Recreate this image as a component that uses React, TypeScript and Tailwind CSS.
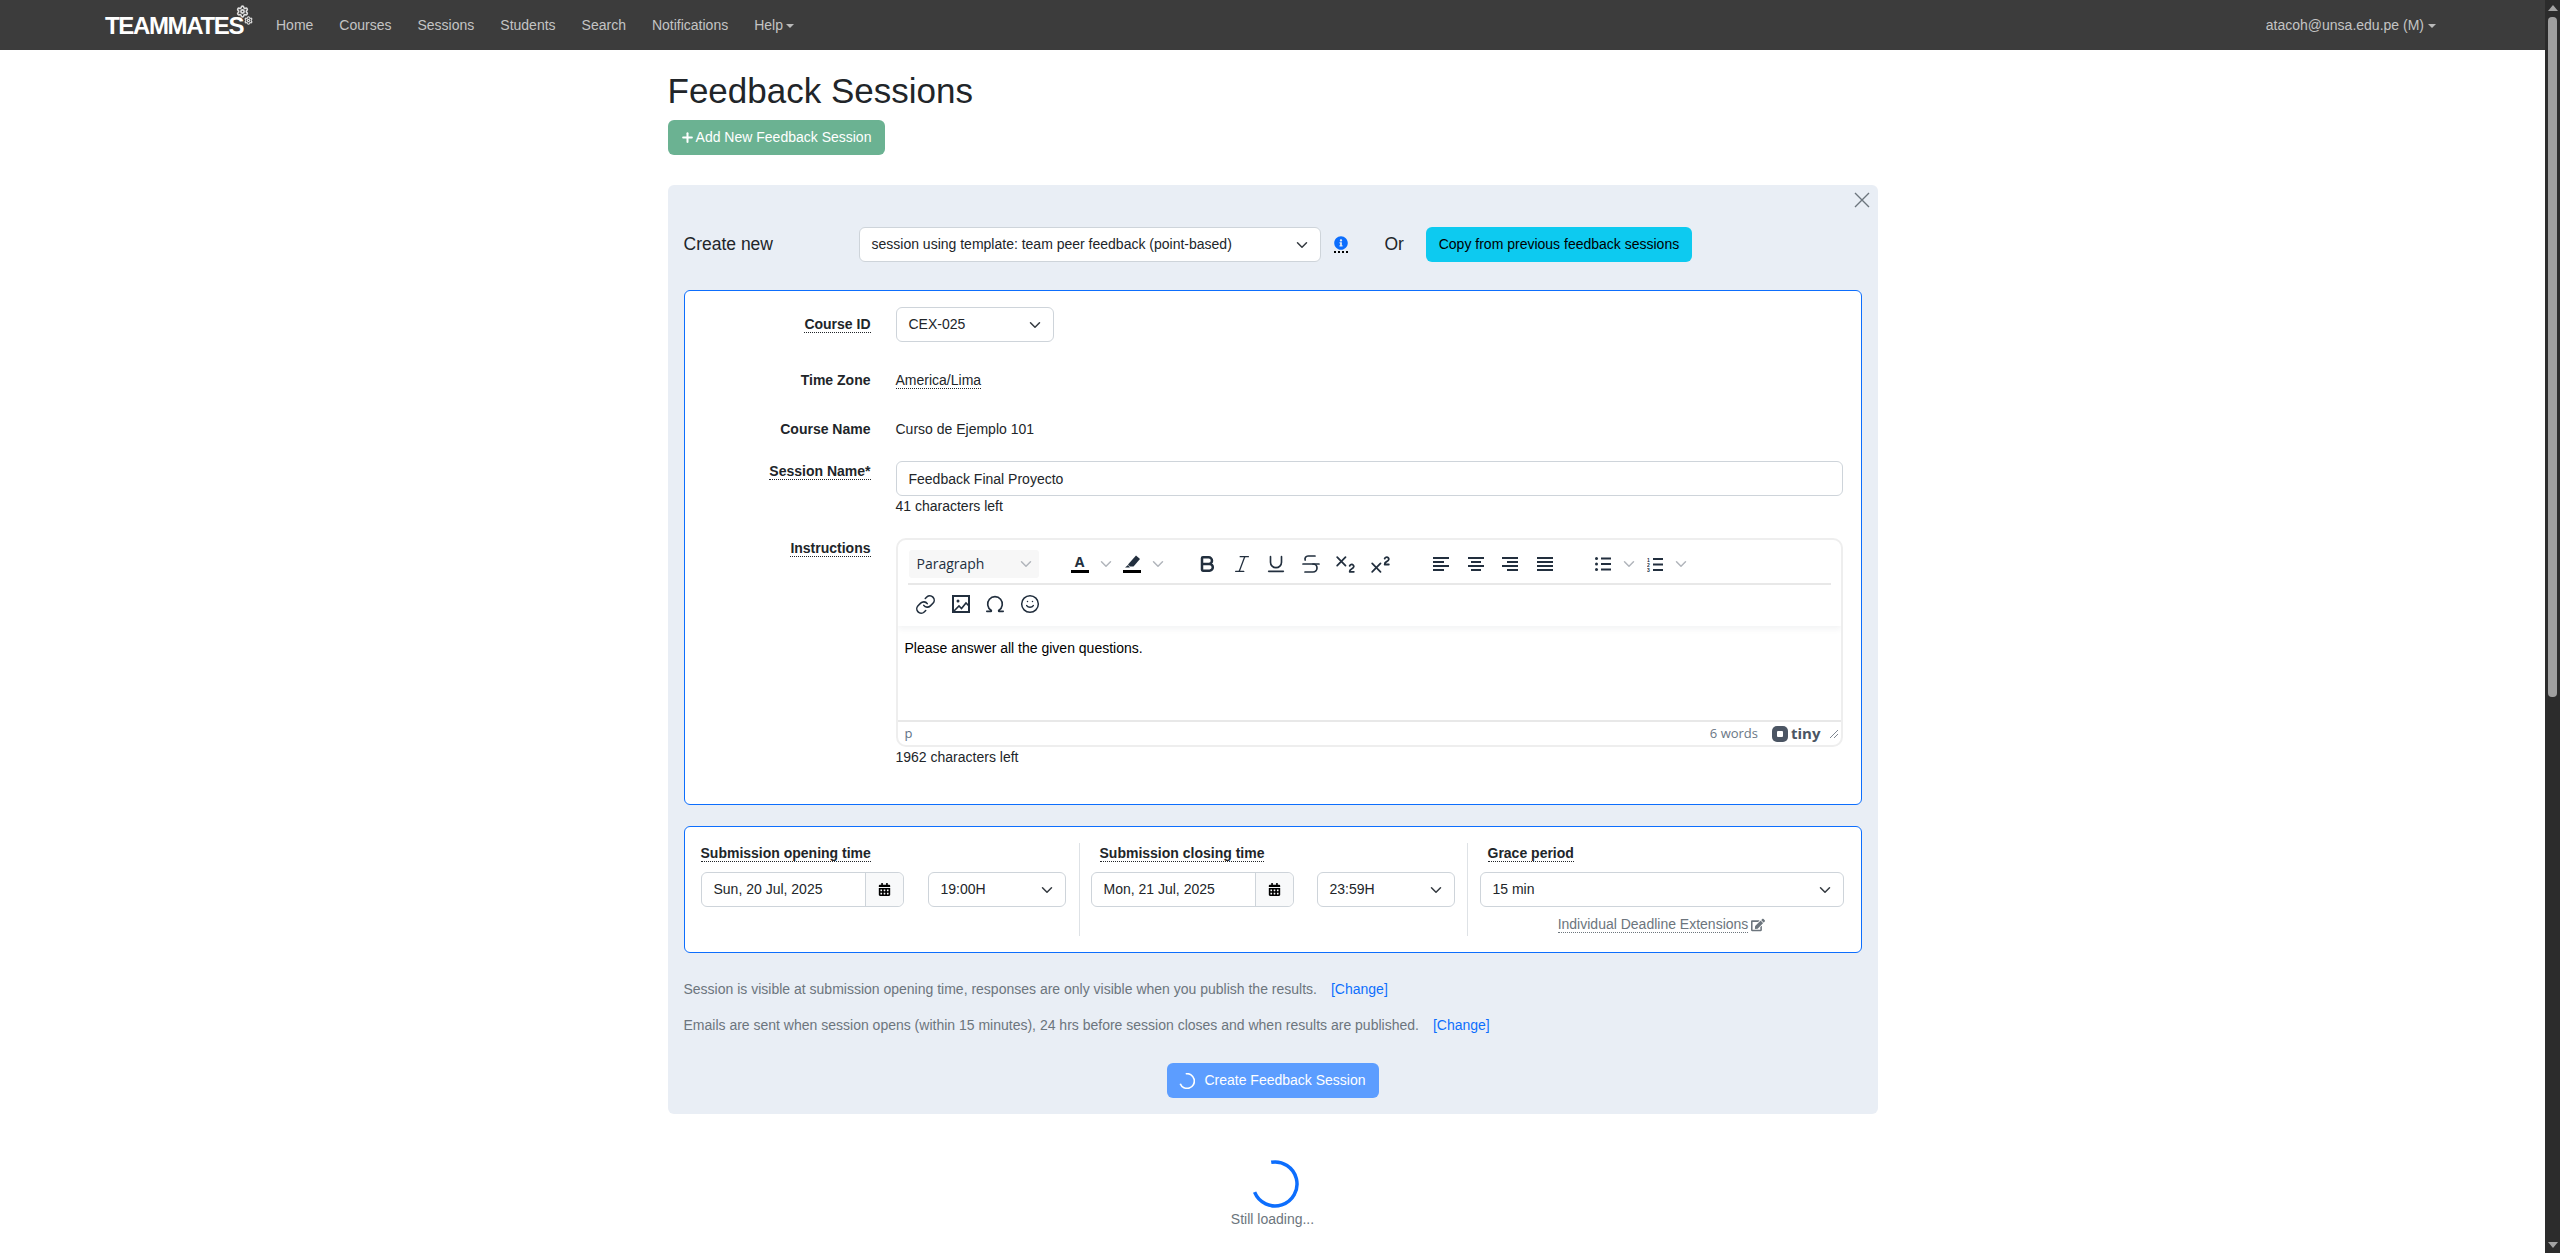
import {
  Bold,
  Italic,
  Underline,
  Strikethrough,
  Subscript,
  Superscript,
  Link,
  Omega,
  Plus,
  Smile,
  Settings,
} from 'lucide-react'
import { FaCalendarAlt, FaEdit, FaInfoCircle } from 'react-icons/fa'

const NAV_LINKS = ['Home', 'Courses', 'Sessions', 'Students', 'Search', 'Notifications']

function Caret() {
  return <span className="inline-block ml-[3px] border-x-[4px] border-t-[4px] border-x-transparent border-t-[#b9b9b9] align-[2px]" />
}

function Chevron({ className = 'text-[#343a40]' }: { className?: string }) {
  return (
    <svg viewBox="0 0 16 16" className={`w-[12px] h-[12px] ${className}`} fill="none" stroke="currentColor" strokeWidth="2" strokeLinecap="round" strokeLinejoin="round">
      <path d="M2 5l6 6 6-6" />
    </svg>
  )
}

function Select({ value, className = '' }: { value: string; className?: string }) {
  return (
    <div className={`h-[35px] flex items-center justify-between pl-[12px] pr-[12px] bg-white border border-[#ced4da] rounded-[6px] text-[14px] text-[#212529] ${className}`}>
      <span>{value}</span>
      <Chevron />
    </div>
  )
}

function Dotted({ children, className = '' }: { children: React.ReactNode; className?: string }) {
  return <span className={`border-b border-dotted border-current leading-[16px] inline-block ${className}`}>{children}</span>
}

function DateInput({ value }: { value: string }) {
  return (
    <div className="w-[203px] h-[35px] flex bg-white border border-[#ced4da] rounded-[6px] text-[14px] text-[#212529]">
      <div className="w-[164px] pl-[12px] flex items-center border-r border-[#ced4da]">{value}</div>
      <div className="flex-1 flex items-center justify-center bg-[#f8f9fa] rounded-r-[6px]">
        <FaCalendarAlt size={13} className="text-black" />
      </div>
    </div>
  )
}

function Btn({ children }: { children: React.ReactNode }) {
  return <div className="w-[34.7px] h-[28px] flex items-center justify-center text-[#222f3e]">{children}</div>
}

function SplitBtn({ children }: { children: React.ReactNode }) {
  return (
    <div className="flex items-center h-[28px]">
      <div className="w-[34px] flex items-center justify-center text-[#222f3e]">{children}</div>
      <div className="w-[18px] flex items-center justify-center"><Chevron className="text-[#b2b6bc]" /></div>
    </div>
  )
}

function AlignIcon({ lines }: { lines: [number, number][] }) {
  return (
    <svg width="16" height="14" viewBox="0 0 16 14" fill="currentColor">
      {lines.map(([x, w], i) => (
        <rect key={i} x={x} y={i * 4} width={w} height="2" />
      ))}
    </svg>
  )
}

function ToolbarRow() {
  return (
    <div className="flex items-center h-[28px] pl-[13px]">
      <div className="w-[130px] h-[28px] flex items-center justify-between pl-[8px] pr-[7px] bg-[#f7f7f7] rounded-[3px] text-[14px] text-[#222f3e] font-['Open_Sans',sans-serif] leading-none">
        <span>Paragraph</span>
        <Chevron className="text-[#b2b6bc]" />
      </div>
      <div className="ml-[24px] flex">
        <SplitBtn>
          <div className="flex flex-col items-center">
            <span className="text-[14px] leading-[14px] font-bold font-['Open_Sans',sans-serif]">A</span>
            <span className="w-[18px] h-[3px] bg-black mt-[1px]" />
          </div>
        </SplitBtn>
        <SplitBtn>
          <div className="flex flex-col items-center">
            <svg width="18" height="13" viewBox="0 0 18 13" fill="currentColor"><path d="M13 0.5l4 3.5-6.5 7.5H7L5 9.5z" /><path d="M5 10l2 2.5H2z" /></svg>
            <span className="w-[18px] h-[3px] bg-black mt-[2px]" />
          </div>
        </SplitBtn>
      </div>
      <div className="ml-[23px] flex">
        <Btn><Bold size={20} strokeWidth={3} /></Btn>
        <Btn><Italic size={22} strokeWidth={1.4} /></Btn>
        <Btn><Underline size={22} strokeWidth={1.8} /></Btn>
        <Btn><Strikethrough size={24} strokeWidth={1.7} /></Btn>
        <Btn><Subscript size={25} strokeWidth={1.7} /></Btn>
        <Btn><Superscript size={25} strokeWidth={1.7} /></Btn>
      </div>
      <div className="ml-[26px] flex">
        <Btn><AlignIcon lines={[[0, 16], [0, 11], [0, 16], [0, 11]]} /></Btn>
        <Btn><AlignIcon lines={[[0, 16], [3, 10], [0, 16], [3, 10]]} /></Btn>
        <Btn><AlignIcon lines={[[0, 16], [5, 11], [0, 16], [5, 11]]} /></Btn>
        <Btn><AlignIcon lines={[[0, 16], [0, 16], [0, 16], [0, 16]]} /></Btn>
      </div>
      <div className="ml-[24px] flex">
        <SplitBtn>
          <svg width="16" height="14" viewBox="0 0 16 14" fill="currentColor">
            <circle cx="1.5" cy="1.5" r="1.5" /><circle cx="1.5" cy="7" r="1.5" /><circle cx="1.5" cy="12.5" r="1.5" />
            <rect x="6" y="0.5" width="10" height="2" /><rect x="6" y="6" width="10" height="2" /><rect x="6" y="11.5" width="10" height="2" />
          </svg>
        </SplitBtn>
        <SplitBtn>
          <svg width="16" height="15" viewBox="0 0 16 15" fill="currentColor">
            <text x="0" y="4.5" fontSize="5" fontWeight="700">1</text><text x="0" y="9.5" fontSize="5" fontWeight="700">2</text><text x="0" y="14.5" fontSize="5" fontWeight="700">3</text>
            <rect x="6" y="1" width="10" height="2" /><rect x="6" y="6.5" width="10" height="2" /><rect x="6" y="12" width="10" height="2" />
          </svg>
        </SplitBtn>
      </div>
    </div>
  )
}

function Editor() {
  return (
    <div className="h-[209px] border-2 border-[#eeeeee] rounded-[10px] flex flex-col overflow-hidden">
      <div className="h-[86px] pt-[10px] shadow-[0_3px_6px_rgba(34,47,62,0.06)] relative">
        <div className="-ml-[2px]"><ToolbarRow /></div>
        <div className="mx-[10px] mt-[5px] border-t-2 border-[#e8e8e8]" />
        <div className="flex items-center h-[38px] pl-[11px] text-[#222f3e]">
          <Btn><Link size={21} strokeWidth={1.8} /></Btn>
          <Btn>
            <svg width="18" height="18" viewBox="0 0 18 18" fill="none" stroke="currentColor" strokeWidth="2">
              <rect x="1" y="1" width="16" height="16" />
              <circle cx="6" cy="6" r="1.5" fill="currentColor" stroke="none" />
              <path d="M2 16l5-5 2.5 2.5L14 8l3 3" strokeWidth="1.6" />
            </svg>
          </Btn>
          <Btn><Omega size={22} strokeWidth={1.8} /></Btn>
          <Btn><Smile size={20} strokeWidth={1.8} /></Btn>
        </div>
      </div>
      <div className="flex-1 px-[7px] pt-[12px] text-[14px] leading-[20px] text-black">Please answer all the given questions.</div>
      <div className="h-[25px] border-t-2 border-[#e8e8e8] flex items-center justify-between pl-[7px] pr-[2px] text-[13px] text-[#5f7186] font-['Open_Sans',sans-serif]">
        <span>p</span>
        <div className="flex items-center">
          <span className="text-[#6b7785]">6 words</span>
          <span className="ml-[14px] w-[16px] h-[16px] rounded-[5px] bg-[#4b5563] flex items-center justify-center">
            <span className="w-[6px] h-[6px] bg-white rounded-[1px]" />
          </span>
          <span className="ml-[3px] text-[15px] leading-none font-bold text-[#4b5563]">tiny</span>
          <svg width="10" height="10" viewBox="0 0 10 10" className="ml-[8px] text-[#7f8791]" stroke="currentColor" fill="none"><path d="M1 9l8-8M5 9l4-4" /></svg>
        </div>
      </div>
    </div>
  )
}

function Spinner({ size, stroke, className }: { size: number; stroke: number; className: string }) {
  return (
    <svg width={size} height={size} viewBox="0 0 48 48" fill="none" className={className} stroke="currentColor" strokeWidth={stroke}>
      <path d="M20.2 2.3A22 22 0 1 1 3.6 32.2" />
    </svg>
  )
}

export default function App() {
  return (
    <div className="flex h-[1253px] overflow-hidden bg-white font-['Liberation_Sans',Arial,sans-serif] text-[#212529] text-[14px]">
      <div className="flex-1 min-w-0">
        <nav className="h-[50px] bg-[#3c3c3c] flex items-center pl-[105px] text-[#c4c4c4] text-[14px]">
          <div className="relative w-[148px] text-white font-bold text-[24px] tracking-[-1.35px] leading-none pt-[2px]">
            TEAMMATES
            <Settings size={13} strokeWidth={3} className="absolute left-[131px] top-[-7px] text-[#dddddd]" />
            <Settings size={9} strokeWidth={3} className="absolute left-[139px] top-[4px] text-[#dddddd]" />
          </div>
          <div className="flex ml-[23px] gap-[26px]">
            {NAV_LINKS.map((l) => <span key={l}>{l}</span>)}
            <span>Help<Caret /></span>
          </div>
          <span className="ml-auto mr-[109px]">atacoh@unsa.edu.pe (M)<span className="ml-[1px]"><Caret /></span></span>
        </nav>

        <main className="w-[1210px] mx-auto">
          <h1 className="mt-[21px] h-[40px] text-[35px] leading-[40px] text-[#212529]">Feedback Sessions</h1>
          <button className="mt-[9px] flex items-center justify-center gap-[1px] w-[217px] h-[35px] pr-[1px] bg-[#6bb292] rounded-[6px] text-white text-[14px]">
            <Plus size={15} strokeWidth={3.2} />Add New Feedback Session
          </button>

          <section className="relative mt-[30px] h-[929px] bg-[#e9eef5] rounded-[6px] px-[16px] pt-[42px]">
            <svg width="16" height="16" viewBox="0 0 16 16" className="absolute right-[8px] top-[7px] text-[#6c757d]" stroke="currentColor" strokeWidth="1.4"><path d="M1 1l14 14M15 1L1 15" /></svg>

            <div className="flex items-center h-[35px]">
              <span className="w-[175px] text-[17.5px]">Create new</span>
              <Select value="session using template: team peer feedback (point-based)" className="w-[462px]" />
              <span className="ml-[13px] border-b-2 border-dotted border-black pb-[1px]"><FaInfoCircle size={14} className="text-[#0d6efd]" /></span>
              <span className="ml-[37px] text-[17.5px]">Or</span>
              <button className="ml-[22px] w-[266px] h-[35px] bg-[#0dcaf0] rounded-[6px] text-black text-[14px]">Copy from previous feedback sessions</button>
            </div>

            <div className="mt-[28px] h-[515px] bg-white border border-[#0d6efd] rounded-[6px] pt-[16px] pr-[18px]">
              <div className="grid grid-cols-[186px_1fr] gap-x-[25px]">
                <div className="text-right font-bold pt-[7px]"><Dotted>Course ID</Dotted></div>
                <Select value="CEX-025" className="w-[158px]" />

                <div className="mt-[28px] text-right font-bold leading-[20px]">Time Zone</div>
                <div className="mt-[28px] leading-[20px]"><Dotted>America/Lima</Dotted></div>

                <div className="mt-[29px] text-right font-bold leading-[20px]">Course Name</div>
                <div className="mt-[29px] leading-[20px]">Curso de Ejemplo 101</div>

                <div className="mt-[22px] text-right font-bold"><Dotted>Session Name*</Dotted></div>
                <div className="mt-[22px]">
                  <input defaultValue="Feedback Final Proyecto" className="w-full h-[35px] px-[12px] border border-[#ced4da] rounded-[6px] outline-none" />
                  <div className="mt-[1px] leading-[18px]">41 characters left</div>
                </div>

                <div className="mt-[22px] text-right font-bold pt-[1px]"><Dotted>Instructions</Dotted></div>
                <div className="mt-[23px]">
                  <Editor />
                  <div className="leading-[20px]">1962 characters left</div>
                </div>
              </div>
            </div>

            <div className="mt-[21px] h-[127px] bg-white border border-[#0d6efd] rounded-[6px] py-[16px] pl-[16px] pr-[17px] flex">
              <div className="w-[379px] border-r border-[#dee2e6]">
                <div className="font-bold leading-[20px]"><Dotted>Submission opening time</Dotted></div>
                <div className="mt-[9px] flex gap-[24px]">
                  <DateInput value="Sun, 20 Jul, 2025" />
                  <Select value="19:00H" className="w-[138px]" />
                </div>
              </div>
              <div className="w-[388px] border-r border-[#dee2e6] pl-[11px]">
                <div className="font-bold leading-[20px] pl-[9px]"><Dotted>Submission closing time</Dotted></div>
                <div className="mt-[9px] flex gap-[23px]">
                  <DateInput value="Mon, 21 Jul, 2025" />
                  <Select value="23:59H" className="w-[138px]" />
                </div>
              </div>
              <div className="flex-1 pl-[12px]">
                <div className="font-bold leading-[20px] pl-[8px]"><Dotted>Grace period</Dotted></div>
                <Select value="15 min" className="mt-[9px]" />
                <div className="mt-[9px] flex justify-center items-center text-[#6c757d]">
                  <Dotted>Individual Deadline Extensions</Dotted>
                  <FaEdit size={14} className="ml-[3px]" />
                </div>
              </div>
            </div>

            <p className="mt-[26px] leading-[20px] text-[#6c757d] text-[14px]">
              Session is visible at submission opening time, responses are only visible when you publish the results.
              <a className="ml-[14px] text-[#0d6efd] text-[14px]">[Change]</a>
            </p>
            <p className="mt-[16px] leading-[20px] text-[#6c757d] text-[14px]">
              Emails are sent when session opens (within 15 minutes), 24 hrs before session closes and when results are published.
              <a className="ml-[14px] text-[#0d6efd] text-[14px]">[Change]</a>
            </p>

            <button className="mt-[28px] mx-auto w-[212px] h-[35px] flex items-center justify-center gap-[9px] bg-[#5c9dff] rounded-[6px] text-white text-[14px]">
              <Spinner size={16} stroke={5} className="text-white" />
              Create Feedback Session
            </button>
          </section>

          <div className="mt-[46px] flex flex-col items-center">
            <Spinner size={48} stroke={3.5} className="text-[#0d6efd] ml-[4px]" />
            <span className="mt-[2px] text-[14px] leading-[18px] text-[#6c757d]">Still loading...</span>
          </div>
        </main>
      </div>

      <aside className="w-[15px] bg-[#2c2c2c] flex flex-col items-center pt-[5px] relative">
        <span className="border-x-[5px] border-b-[6px] border-x-transparent border-b-[#a3a3a3]" />
        <span className="mt-[6px] w-[9px] h-[680px] rounded-[4px] bg-[#9f9f9f]" />
        <span className="absolute bottom-[5px] border-x-[5px] border-t-[6px] border-x-transparent border-t-[#a3a3a3]" />
      </aside>
    </div>
  )
}
